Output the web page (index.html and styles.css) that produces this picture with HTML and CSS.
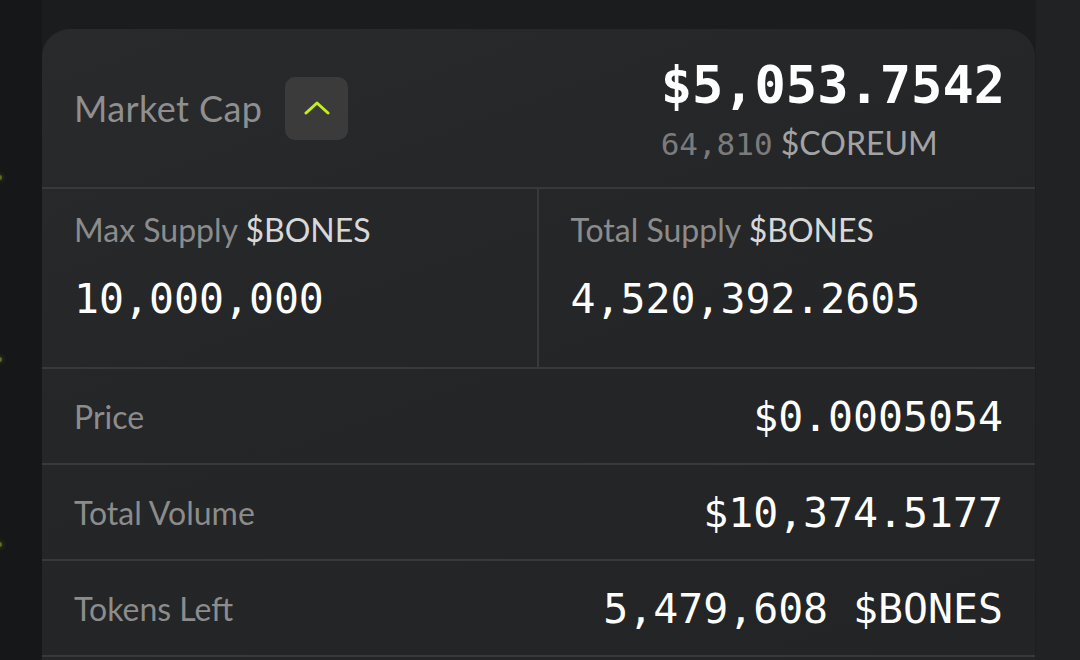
FILE: index.html
```html
<!DOCTYPE html>
<html lang="en">
<head>
    <meta charset="UTF-8">
    <meta name="viewport" content="width=device-width, initial-scale=1.0">
    <title>Token Stats</title>
    <link rel="stylesheet" href="styles.css">
</head>
<body>
    <div class="page">
        <div class="rail-left">
            <span class="dot"></span>
            <span class="dot"></span>
            <span class="dot"></span>
        </div>

        <div class="main">
            <div class="card">
                <div class="card-header">
                    <div class="header-left">
                        <span class="header-title">Market Cap</span>
                        <button class="toggle-button" aria-label="Collapse">
                            <svg width="26" height="16" viewBox="0 0 26 16">
                                <path d="M2 13 L13 3 L24 13" fill="none" stroke="#c3ef1c" stroke-width="3" stroke-linecap="round" stroke-linejoin="round"/>
                            </svg>
                        </button>
                    </div>
                    <div class="header-right">
                        <div class="big-value">$5,053.7542</div>
                        <div class="sub-value"><span class="mono">64,810</span> $COREUM</div>
                    </div>
                </div>

                <div class="supply-row">
                    <div class="supply-cell">
                        <div class="label">Max Supply <span class="unit">$BONES</span></div>
                        <div class="value">10,000,000</div>
                    </div>
                    <div class="supply-cell">
                        <div class="label">Total Supply <span class="unit">$BONES</span></div>
                        <div class="value">4,520,392.2605</div>
                    </div>
                </div>

                <div class="stat-row">
                    <span class="label">Price</span>
                    <span class="value">$0.0005054</span>
                </div>
                <div class="stat-row">
                    <span class="label">Total Volume</span>
                    <span class="value">$10,374.5177</span>
                </div>
                <div class="stat-row">
                    <span class="label">Tokens Left</span>
                    <span class="value">5,479,608 $BONES</span>
                </div>
            </div>
        </div>

        <div class="rail-right"></div>
    </div>
</body>
</html>
```

FILE: styles.css
```css
body {
    margin: 0;
    background: #1b1c1d;
    font-family: Lato, "Open Sans", sans-serif;
    color: #fff;
}
.page {
    display: flex;
    height: 660px;
    overflow: hidden;
}
.rail-left {
    width: 42px;
    background: #161718;
    position: relative;
}
.dot {
    position: absolute;
    left: -3px;
    width: 5px;
    height: 5px;
    border-radius: 50%;
    background: #5c6a22;
    box-shadow: 0 0 5px 1px rgba(140, 170, 30, .25);
}
.dot:nth-child(1) { top: 175px; }
.dot:nth-child(2) { top: 357px; }
.dot:nth-child(3) { top: 542px; }
.main {
    flex: 1;
    padding-top: 29px;
}
.rail-right {
    width: 44px;
    background: #212224;
    border-left: 1px solid #1d1e1f;
}
.card {
    background: linear-gradient(160deg, #292a2b 0%, #252627 40%, #232425 100%);
    border-radius: 28px 28px 0 0;
    height: 660px;
}
.card-header {
    display: flex;
    justify-content: space-between;
    align-items: center;
    height: 158px;
    padding: 0 32px;
    border-bottom: 2px solid #38393a;
}
.header-left {
    display: flex;
    align-items: center;
}
.header-title {
    font-size: 36px;
    letter-spacing: .4px;
    color: #8f8f90;
}
.toggle-button {
    width: 63px;
    height: 63px;
    margin-left: 23px;
    border: none;
    border-radius: 10px;
    background: #3b3b3c;
    display: flex;
    align-items: center;
    justify-content: center;
    padding: 0;
    cursor: pointer;
}
.header-right {
    text-align: left;
    margin-top: 14px;
    margin-right: -2px;
}
.big-value {
    font-family: "DejaVu Sans Mono", "Liberation Mono", monospace;
    font-weight: bold;
    font-size: 52px;
    line-height: 56px;
}
.sub-value {
    font-size: 32px;
    line-height: 60px;
    color: #a3a3a4;
}
.mono {
    font-family: "DejaVu Sans Mono", "Liberation Mono", monospace;
    font-size: 31px;
    color: #7b7b7c;
}
.supply-row {
    display: grid;
    grid-template-columns: 1fr 1fr;
    border-bottom: 2px solid #38393a;
}
.supply-cell {
    height: 178px;
    padding: 21px 32px 0;
    box-sizing: border-box;
}
.supply-cell:first-child {
    border-right: 2px solid #38393a;
}
.label {
    font-size: 32px;
    color: #8c8c8d;
}
.unit {
    color: #d8d8d8;
}
.value {
    font-family: "DejaVu Sans Mono", "Liberation Mono", monospace;
    font-size: 41.5px;
    color: #fff;
}
.supply-cell .value {
    margin-top: 25px;
}
.stat-row {
    display: flex;
    justify-content: space-between;
    align-items: center;
    height: 94px;
    padding: 0 32px;
    border-bottom: 2px solid #38393a;
}
```
